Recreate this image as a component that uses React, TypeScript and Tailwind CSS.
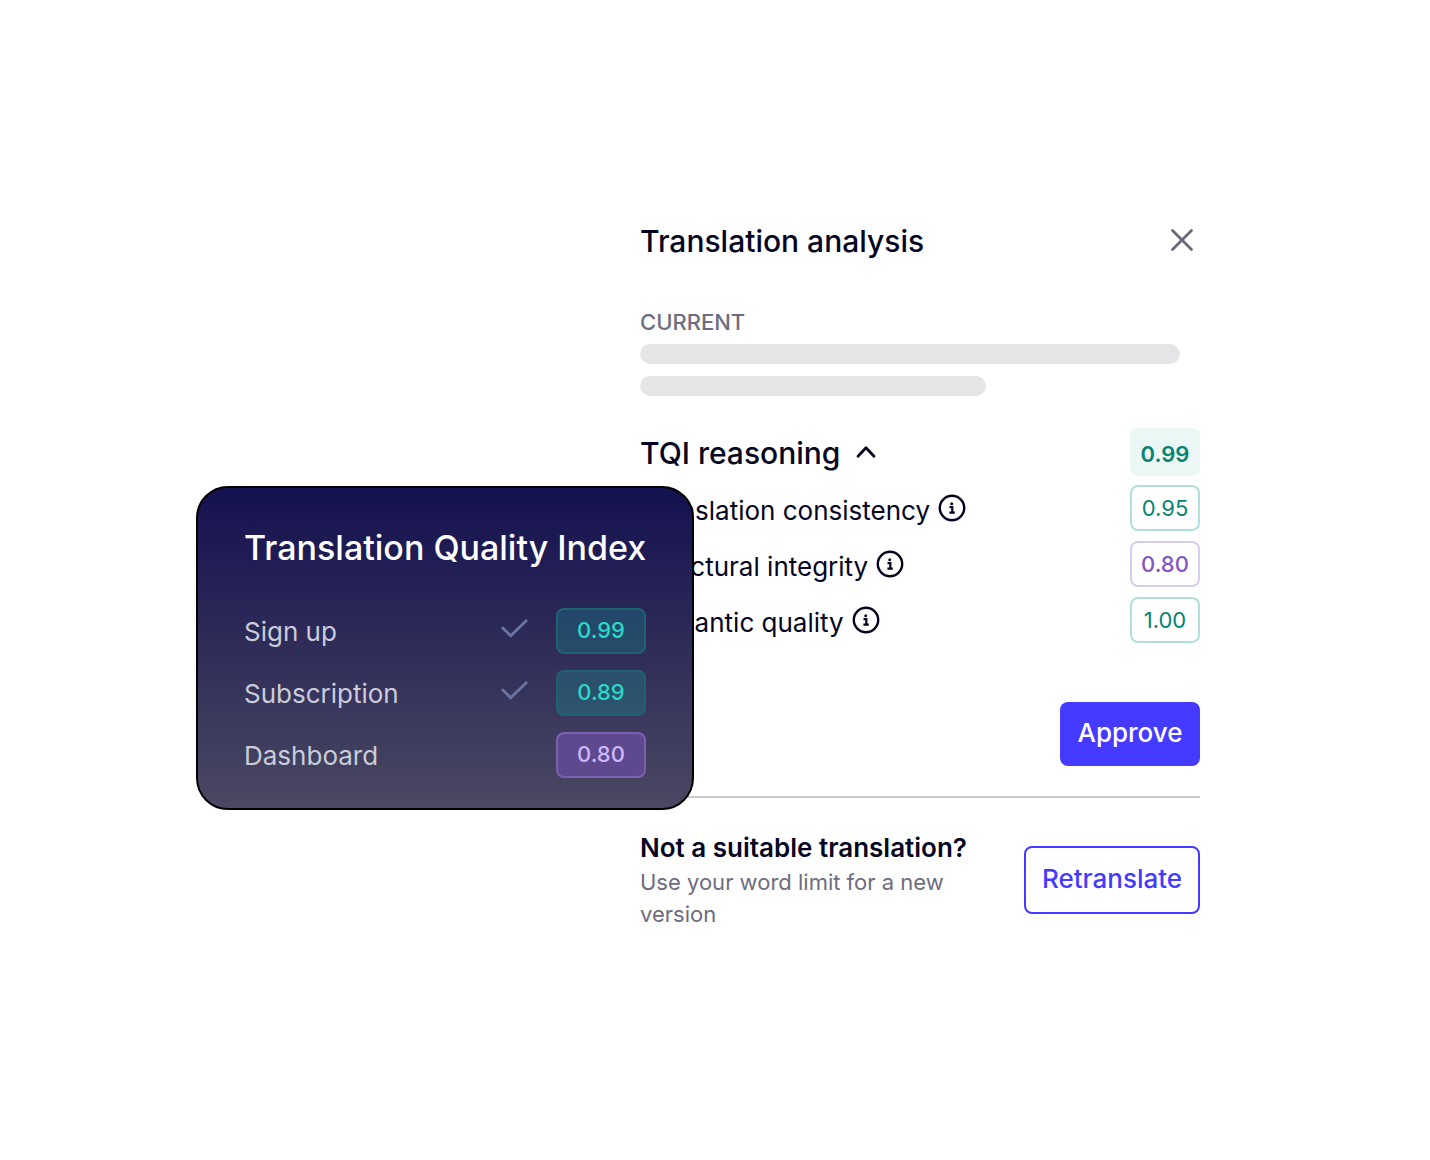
import clsx from "clsx";

const scores = [
  { label: "Translation consistency", value: "0.95", low: false },
  { label: "Structural integrity", value: "0.80", low: true },
  { label: "Semantic quality", value: "1.00", low: false },
];

const pages = [
  { label: "Sign up", value: "0.99", approved: true },
  { label: "Subscription", value: "0.89", approved: true },
  { label: "Dashboard", value: "0.80", approved: false },
];

const CloseIcon = () => (
  <svg className="size-6" viewBox="0 0 24 24" fill="none" stroke="currentColor" strokeWidth="2.8" strokeLinecap="round">
    <path d="M2.500 2.500l19 19M21.500 2.500l-19 19" />
  </svg>
);

const ChevronIcon = () => (
  <svg className="size-6" viewBox="0 0 24 24" fill="none" stroke="currentColor" strokeWidth="2.8" strokeLinecap="round" strokeLinejoin="round">
    <path d="M4 16.200l8-8.400 8 8.400" />
  </svg>
);

const InfoIcon = () => (
  <svg className="size-7" viewBox="0 0 28 28" fill="none" stroke="currentColor">
    <circle cx="14" cy="14" r="12.200" strokeWidth="2.400" />
    <circle cx="13.700" cy="9.700" r="1.500" fill="currentColor" stroke="none" />
    <path d="M11.500 13.200h2.800v5.300M11.400 18.700h5.400" strokeWidth="2.200" />
  </svg>
);

const CheckIcon = () => (
  <svg className="h-5 w-7" viewBox="0 0 28 20" fill="none" stroke="currentColor" strokeWidth="2.800">
    <path d="M2 9.200l8.700 8.500L27 2" />
  </svg>
);

const TranslationAnalysis = () => {
  return (
    <section className="ml-auto w-full max-w-[560px] text-[#05051f]">
      <header className="flex h-10 items-center justify-between">
        <h1 className="pt-0.5 text-[30px] leading-9 font-medium">Translation analysis</h1>
        <button type="button" aria-label="Close" className="mr-[6px] text-[#6a687d]">
          <CloseIcon />
        </button>
      </header>

      <p className="mt-12 text-[22px] leading-7 font-medium text-[#6e6c80]">CURRENT</p>
      <div className="mt-2 flex flex-col gap-3">
        <div className="mr-5 h-5 rounded-full bg-[#e5e5e7]" />
        <div className="h-5 w-[346px] rounded-full bg-[#e5e5e7]" />
      </div>

      <div className="mt-8 flex h-12 items-center justify-between">
        <h2 className="text-[30px] leading-9 font-medium">
          <button type="button" aria-expanded="true" className="flex items-center gap-3.5">
            <span className="pt-0.5">TQI reasoning</span>
            <ChevronIcon />
          </button>
        </h2>
        <span className="flex h-12 w-[70px] items-center justify-center rounded-lg bg-[#eaf7f5] pt-1 text-[22px] font-semibold text-[#078371]">
          0.99
        </span>
      </div>

      <ul className="mt-1">
        {scores.map((score) => (
          <li key={score.label} className="flex h-14 items-center justify-between">
            <div className="flex items-center gap-2">
              <span className="pt-1.5 text-[26px] leading-8">{score.label}</span>
              <button type="button" aria-label={"About " + score.label}>
                <InfoIcon />
              </button>
            </div>
            <span
              className={clsx(
                "flex h-[46px] w-[70px] items-center justify-center rounded-lg border-2 text-[22px]",
                score.low ? "border-[#d8cbf0] font-medium text-[#8455c4]" : "border-[#b0e0da] text-[#078371]"
              )}
            >
              {score.value}
            </span>
          </li>
        ))}
      </ul>

      <div className="mt-[54px] flex justify-end border-b-2 border-[#cbcad0] pb-[30px]">
        <button type="button" className="h-16 w-[140px] rounded-lg bg-[#453aff] pb-1 text-[26px] font-medium text-white">
          Approve
        </button>
      </div>

      <footer className="flex items-center justify-between pt-8">
        <div className="w-[340px]">
          <h3 className="text-[26px] leading-9 font-semibold">Not a suitable translation?</h3>
          <p className="text-[22px] leading-8 text-[#6e6c80]">Use your word limit for a new version</p>
        </div>
        <button type="button" className="h-[68px] w-44 rounded-lg border-2 border-[#453aff] pb-1 text-[26px] font-medium text-[#453aff]">
          Retranslate
        </button>
      </footer>
    </section>
  );
};

const QualityIndex = () => {
  return (
    <aside className="absolute top-[266px] left-0 w-[498px] rounded-[32px] border-2 border-black bg-linear-to-b/srgb from-[#141150] to-[#4a4862] px-[46px] pt-9 pb-[30px]">
      <h2 className="text-[34px] leading-[48px] font-medium whitespace-nowrap text-white">Translation Quality Index</h2>
      <ul className="mt-9 flex flex-col gap-4">
        {pages.map((page) => (
          <li key={page.label} className="flex h-[46px] items-center gap-7">
            <span className="flex-1 pt-0.5 text-[26px] leading-8 text-[#c9ccd9]">{page.label}</span>
            {page.approved && (
              <span className="pb-1.5 text-[#6b75a5]">
                <CheckIcon />
              </span>
            )}
            <span
              className={clsx(
                "flex h-[46px] w-[90px] items-center justify-center rounded-lg border-2 pb-0.5 text-[22px] font-medium",
                page.approved
                  ? "border-[#1f6372] bg-[#00c8b4]/20 text-[#2bd9c9]"
                  : "border-[#7c5fae] bg-[#5e498e] text-[#cdb8ff]"
              )}
            >
              {page.value}
            </span>
          </li>
        ))}
      </ul>
    </aside>
  );
};

const App = () => {
  return (
    <main className="min-h-screen bg-white pt-[220px] pr-[230px] pb-24 pl-[196px] font-['Inter',sans-serif]">
      <div className="relative">
        <TranslationAnalysis />
        <QualityIndex />
      </div>
    </main>
  );
};

export default App;
